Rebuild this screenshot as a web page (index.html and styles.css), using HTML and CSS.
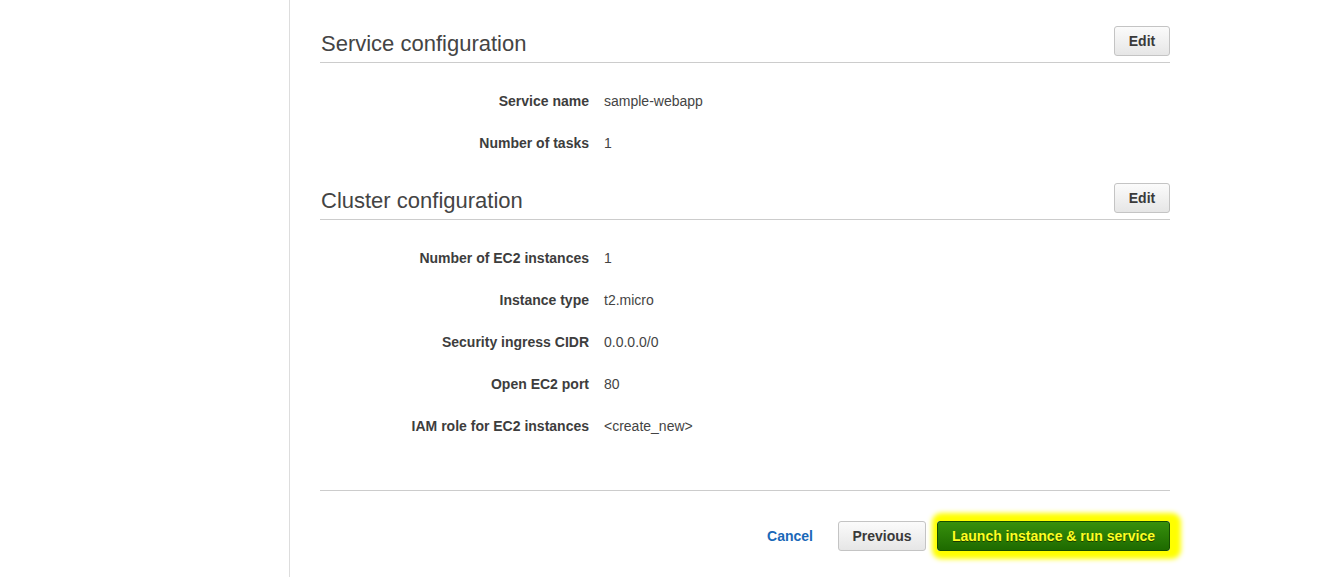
FILE: index.html
```html
<!DOCTYPE html>
<html>
<head>
<meta charset="utf-8">
<title>Review</title>
<link rel="stylesheet" href="styles.css">
</head>
<body>
<div class="page">
  <aside class="sidebar"></aside>
  <main class="content">
    <section class="section">
      <div class="section-header">
        <h2 class="section-title">Service configuration</h2>
        <button class="btn btn-edit">Edit</button>
      </div>
      <div class="rows">
        <div class="row"><div class="label">Service name</div><div class="value">sample-webapp</div></div>
        <div class="row"><div class="label">Number of tasks</div><div class="value">1</div></div>
      </div>
    </section>
    <section class="section section-second">
      <div class="section-header">
        <h2 class="section-title">Cluster configuration</h2>
        <button class="btn btn-edit">Edit</button>
      </div>
      <div class="rows">
        <div class="row"><div class="label">Number of EC2 instances</div><div class="value">1</div></div>
        <div class="row"><div class="label">Instance type</div><div class="value">t2.micro</div></div>
        <div class="row"><div class="label">Security ingress CIDR</div><div class="value">0.0.0.0/0</div></div>
        <div class="row"><div class="label">Open EC2 port</div><div class="value">80</div></div>
        <div class="row"><div class="label">IAM role for EC2 instances</div><div class="value">&lt;create_new&gt;</div></div>
      </div>
    </section>
    <div class="footer">
      <a class="cancel" href="#">Cancel</a>
      <button class="btn btn-prev">Previous</button>
      <button class="btn btn-launch">Launch instance &amp; run service</button>
    </div>
  </main>
</div>
</body>
</html>
```

FILE: styles.css
```css
html, body {
  margin: 0;
  padding: 0;
  background: #ffffff;
  font-family: "Liberation Sans", Arial, sans-serif;
  color: #444444;
  overflow: hidden;
}

.page {
  display: flex;
  height: 577px;
}

.sidebar {
  width: 289px;
  flex: none;
  border-right: 1px solid #dddddd;
}

.content {
  width: 850px;
  padding: 26px 0 0 30px;
}

.section-header {
  display: flex;
  justify-content: space-between;
  align-items: flex-end;
  height: 36px;
  border-bottom: 1px solid #cccccc;
}

.section-title {
  margin: 0 0 5px 1px;
  font-size: 22px;
  font-weight: normal;
  line-height: 26px;
  color: #444444;
}

.btn {
  font-family: "Liberation Sans", Arial, sans-serif;
  font-weight: bold;
  font-size: 14px;
  height: 30px;
  border-radius: 3px;
  cursor: pointer;
}

.btn-edit,
.btn-prev {
  color: #3a3a3a;
  background: linear-gradient(#fbfbfb, #e6e6e6);
  border: 1px solid #c4c4c4;
}

.btn-edit {
  width: 56px;
  padding: 0;
  margin-bottom: 6px;
}

.rows {
  margin-top: 17px;
}

.row {
  display: grid;
  grid-template-columns: 269px 1fr;
  column-gap: 15px;
  padding: 11px 0;
  line-height: 20px;
  font-size: 14px;
}

.label {
  text-align: right;
  font-weight: bold;
  color: #3d3d3d;
}

.value {
  color: #444444;
}

.section-second {
  margin-top: 19px;
}

.footer {
  margin-top: 43px;
  border-top: 1px solid #cccccc;
  padding-top: 30px;
  display: flex;
  justify-content: flex-end;
  align-items: center;
}

.cancel {
  font-size: 14px;
  font-weight: bold;
  color: #1a68b8;
  text-decoration: none;
  margin-right: 25px;
}

.btn-prev {
  width: 88px;
  padding: 0;
  margin-right: 11px;
}

.btn-launch {
  width: 233px;
  padding: 0;
  color: #ffff22;
  background: linear-gradient(#37900c, #1e6a00);
  border: 1px solid #174f00;
  text-shadow: 0 1px 0 #1a3a00;
  box-shadow: 3px 0 5px 8px #ffff00;
}
```
